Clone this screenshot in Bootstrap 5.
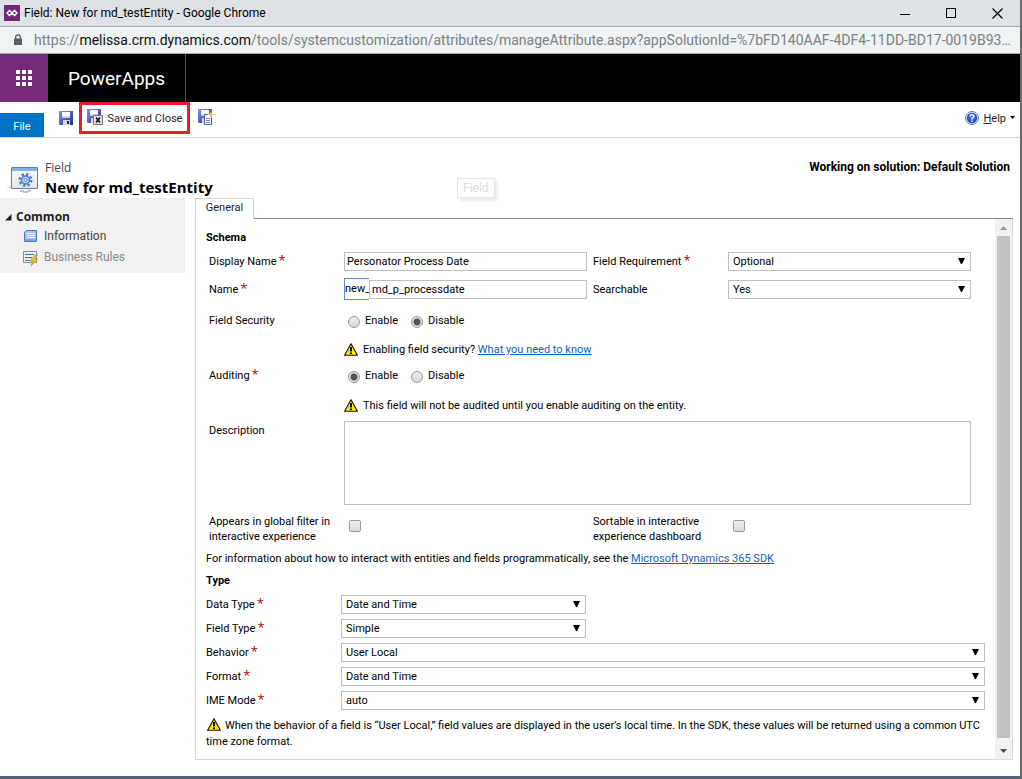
<!DOCTYPE html>
<html lang="en">
<head>
<meta charset="utf-8">
<meta name="viewport" content="width=device-width, initial-scale=1">
<title>Field: New for md_testEntity</title>
<link href="https://cdn.jsdelivr.net/npm/bootstrap@5.3.0/dist/css/bootstrap.min.css" rel="stylesheet">
<style>
  body { font-family: Roboto, "Open Sans", sans-serif; font-size: 11px; line-height: 16px; color: #000; background: #fff; }
  svg { display: block; flex: none; }
  a { color: #1160b7; }
  .app-window { min-height: 100vh; border-right: 2px solid #6a6a6a; border-bottom: 3px solid #56607a; }
  .title-bar { height: 27px; background: #dee1e6; border-bottom: 1px solid #a9abaf; font-size: 12px; }
  .app-mark { width: 16px; height: 16px; background: #742774; }
  .win-btn { width: 46px; height: 26px; }
  .url-bar { height: 27px; background: #eff3f4; border-bottom: 1px solid #a9abaf; font-size: 14px; line-height: 22px; color: #7d8184; padding: 0 8px 0 13px; gap: 11px; }
  .url-bar b { font-weight: 400; color: #111; }
  .product-bar { height: 48px; background: #000; color: #fff; font-size: 19px; }
  .waffle { width: 48px; background: #742a76; }
  .product-name { border-right: 1px solid #555; padding: 2px 20px 0; }
  .ribbon { height: 36px; border-bottom: 1px solid #d6d6d6; }
  .btn.file-tab { width: 44px; height: 24px; background: #0072c6; color: #fff; font-size: 11px; padding: 4px 0 0; }
  .tool-row { padding: 0 5px 4px 15px; }
  .tool-row .btn { font-size: 11px; line-height: 16px; }
  .save-close { border: 3px solid #ed1c24; height: 32px; width: 111px; margin: 0 8px 0 6px; }
  .save-close span, .help-word { padding-top: 2px; }
  .record-head { height: 60px; }
  .record-icon { margin: 27px 0 0 6px; }
  .record-text { margin: 20px 0 0 5px; font-family: "Open Sans", sans-serif; }
  .record-title { font-size: 15px; line-height: 18px; }
  .record-kind { font-size: 12px; line-height: 20px; color: #444; }
  .solution-note { margin: 21px 10px 0 0; font-size: 12px; }
  .ghost-tip { left: 457px; bottom: 0; height: 20px; font-size: 12px; border: 1px solid #e6e6e6; color: #dcdcdc; background: #fff; box-shadow: 3px 3px 2px #eee; padding: 1px 5px; }
  .work-area { padding: 0 7px 16px 0; gap: 10px; }
  .work-area main { min-width: 0; }
  .side-nav { width: 185px; background: #f1f1f1; height: 75px; font-size: 12px; padding: 10px 0 0 5px; }
  .side-nav nav { padding-left: 18px; }
  .side-nav a { color: #444; line-height: 21px; }
  .side-nav a.muted-link { color: #8a8a8a; }
  .side-nav h2 { font-family: "Open Sans", sans-serif; font-size: 12px; line-height: 18px; color: #222; }
  .side-icon { margin-right: 5px; }
  .tab-strip { height: 21px; border-bottom: 1px solid #8b8b98; }
  .tab-item { width: 59px; height: 21px; border: 1px solid #d6d6d6; border-bottom: 0; background: #fff; font-size: 11px; line-height: 16px; }
  .btn.tab-item { padding: 0 0 2px; }
  .panel-box { border: 1px solid #d9d9d9; border-top: 0; }
  .panel-body { padding: 11px 10px 8px; }
  .panel-body h3 { font-size: 11px; line-height: 16px; }
  .schema-grid { display: grid; grid-template-columns: 135px 1fr 141px 1fr; grid-template-rows: 28px 28px 34px 24px 28px 32px 84px 46px; align-items: center; padding: 0 14px 0 3px; margin-top: 1px; }
  .schema-grid .second { padding-left: 6px; }
  .schema-grid > label, .schema-grid > span, .type-grid > label, .warn-gap span { padding-top: 2px; }
  .type-head { margin-top: 6px; }
  .type-grid { display: grid; grid-template-columns: 135px 245px 1fr; grid-auto-rows: 24px; align-items: center; margin-top: 3px; }
  .type-note { margin-top: 6px; }
  .full-row { grid-column: 2 / -1; }
  .row-start { grid-column: 1; }
  .req::after { content: "*"; color: #b00; font-family: "Open Sans", sans-serif; font-size: 13px; line-height: 12px; margin-left: 2px; }
  .entry, .pick { width: 100%; height: 19px; border: 1px solid #bfbfbf; border-radius: 0; padding: 1px 2px 0; color: #000; background: #fff; display: block; }
  .pick { appearance: none; padding: 1px 4px 0; background: #fff url("data:image/svg+xml,%3Csvg xmlns='http://www.w3.org/2000/svg' width='7' height='6'%3E%3Cpath d='M0 0H7L4 6H3Z'/%3E%3C/svg%3E") no-repeat right 5px top 5px; }
  .prefix { width: 25px; height: 22px; flex: none; border: 1px solid #5b8fd0; border-right: 0; line-height: 20px; }
  .memo { height: 84px; resize: none; }
  .pip { appearance: none; width: 12px; height: 12px; margin: 0; border: 1px solid #999; background: linear-gradient(#efefef, #d9d9d9); flex: none; }
  .pip[type=radio] { border-radius: 50%; margin-top: 2px; }
  .pip[type=checkbox] { border-radius: 2px; margin: 0 0 4px 5px; }
  .pip[type=radio]:checked { background: radial-gradient(circle, #555 0 3px, #e4e4e4 4px); }
  .choices { padding: 2px 0 0 4px; }
  .choices label { gap: 5px; }
  .choices label + label { margin-left: 13px; }
  .warn-gap { gap: 5px; }
  .note-icon { vertical-align: -2px; margin: 0 4px 0 1px; }
  .tall { line-height: 15px; }
  .scroll-track { width: 17px; background: #f1f1f1; }
  .scroll-thumb { width: 13px; background: #c1c1c1; }
  .scroll-btn { height: 17px; width: 17px; }
</style>
</head>
<body>
<svg width="0" height="0" class="position-absolute" aria-hidden="true">
  <defs>
    <linearGradient id="disk" x1="0" y1="0" x2="1" y2="1"><stop offset="0" stop-color="#7f93ee"/><stop offset="1" stop-color="#252c86"/></linearGradient>
    <radialGradient id="orb"><stop offset="0" stop-color="#4a86f0"/><stop offset="1" stop-color="#1c45b8"/></radialGradient>
    <symbol id="floppy" viewBox="0 0 14 14"><path fill="url(#disk)" d="M0 0H14V14H1L0 13Z"/><path fill="#f4f7ff" d="M3 1H11V7H3Z"/><path fill="#c4d0f2" d="M3 5H11V7H3Z"/><path fill="#d8d8dc" d="M4 9H11V14H4Z"/><path fill="#222a66" d="M8 10H10V13H8Z"/></symbol>
    <symbol id="warn" viewBox="0 0 14 13"><path d="M7 .7L13.4 12.3H.6Z" fill="#ffea00" stroke="#111" stroke-width="1.1" stroke-linejoin="round"/><path d="M6 4H8V8.500H6ZM6 9.500H8V11H6Z"/></symbol>
  </defs>
</svg>

<div class="app-window d-flex flex-column">
  <header>
    <div class="title-bar d-flex align-items-center">
      <span class="app-mark ms-1 me-1"><svg width="16" height="16" fill="none" stroke="#fff" stroke-width="1.500"><path d="M5.500 5.500L8 8L10.500 5.500L13 8L10.500 10.500L8 8L5.500 10.500L3 8Z"/></svg></span>
      <span>Field: New for md_testEntity - Google Chrome</span>
      <div class="ms-auto d-flex">
        <button class="btn p-0 border-0 win-btn" aria-label="Minimize"><svg class="mx-auto" width="11" height="11" stroke="#000"><path d="M0 6.500H10"/></svg></button>
        <button class="btn p-0 border-0 win-btn" aria-label="Maximize"><svg class="mx-auto" width="11" height="11" stroke="#000" fill="none"><path d="M.5.5H9.500V9.500H.5Z"/></svg></button>
        <button class="btn p-0 border-0 win-btn" aria-label="Close"><svg class="mx-auto" width="11" height="11" stroke="#000" stroke-width="1.200"><path d="M.5.5L10.500 10.500M10.500.5L.5 10.500"/></svg></button>
      </div>
    </div>
    <div class="url-bar d-flex align-items-center">
      <svg width="10" height="12"><path fill="#5a5e62" d="M1 4.500H9V11H1Z"/><path fill="none" stroke="#5a5e62" stroke-width="1.300" d="M2.700 5V3Q2.700 1 5 1T7.300 3V5"/></svg>
      <span class="text-truncate">https://<b>melissa.crm.dynamics.com</b>/tools/systemcustomization/attributes/manageAttribute.aspx?appSolutionId=%7bFD140AAF-4DF4-11DD-BD17-0019B93...</span>
    </div>
    <div class="product-bar d-flex align-items-stretch">
      <button class="btn p-0 border-0 rounded-0 waffle" aria-label="Apps"><svg class="mx-auto" width="16" height="16" fill="#fff"><path d="M0 0h4v4H0zM6 0h4v4H6zM12 0h4v4h-4zM0 6h4v4H0zM6 6h4v4H6zM12 6h4v4h-4zM0 12h4v4H0zM6 12h4v4H6zM12 12h4v4h-4z"/></svg></button>
      <span class="product-name d-flex align-items-center">PowerApps</span>
    </div>
    <nav class="ribbon d-flex" aria-label="Ribbon">
      <button class="btn border-0 rounded-0 file-tab align-self-end">File</button>
      <div class="d-flex align-items-center flex-fill tool-row">
        <button class="btn p-0 border-0" aria-label="Save"><svg width="14" height="14"><use href="#floppy"/></svg></button>
        <button class="btn rounded-0 p-0 save-close d-flex align-items-center justify-content-center"><svg width="17" height="17" class="me-1"><use href="#floppy" width="14" height="14"/><path d="M6.500 6.500H15.500V15.500H6.500Z" fill="#e4e4e4" stroke="#777"/><path d="M9 8.500L13 13.500M13 8.500L9 13.500" stroke="#111" stroke-width="1.600"/></svg><span>Save and Close</span></button>
        <button class="btn p-0 border-0" aria-label="Save and New"><svg width="17" height="17"><use href="#floppy" width="14" height="14"/><path d="M6.500 5.500H13.500V15.500H6.500Z" fill="#f2f6ff" stroke="#4c5f8a"/><path d="M8 9.500H12M8 11.500H12M8 13.500H12" stroke="#7488b8"/><path d="M13 2L14 4.500L16.500 5.500L14 6.500L13 9L12 6.500L9.500 5.500L12 4.500Z" fill="#f7c64a"/></svg></button>
        <button class="btn p-0 border-0 ms-auto d-flex align-items-center"><svg width="14" height="14"><circle cx="7" cy="7" r="6.500" fill="#e9f1ff" stroke="#5b7dc8"/><circle cx="7" cy="7" r="5.200" fill="url(#orb)"/><path d="M5 5.500Q5 3.700 7 3.700T9 5.500Q9 6.500 7 7.300V8.500M7 9.500V11" fill="none" stroke="#fff" stroke-width="1.400"/></svg><span class="mx-1 help-word"><u>H</u>elp</span><svg width="5" height="3"><path d="M0 0H5L2.500 3Z"/></svg></button>
      </div>
    </nav>
  </header>

  <div class="record-head d-flex position-relative">
    <svg class="record-icon" width="34" height="30"><defs><linearGradient id="pane" x1="0" y1="0" x2="0" y2="1"><stop offset="0" stop-color="#fff"/><stop offset="1" stop-color="#dde5ec"/></linearGradient></defs><path d="M0 22L6 19V24Z" fill="#e3e3e3"/><path d="M5.500 2.500H31.500V23.500H5.500Z" fill="url(#pane)" stroke="#6d7f8e"/><path d="M6 3H31V6H6Z" fill="#7fb6e6"/><circle cx="19.500" cy="15" r="5.500" fill="none" stroke="#4f79c4" stroke-width="3" stroke-dasharray="2.200 2.100"/><circle cx="19.500" cy="15" r="4" fill="#bcd2f5" stroke="#4f79c4" stroke-width="1.500"/><circle cx="19.500" cy="15" r="1.500" fill="#fff" stroke="#4f79c4"/><path d="M14 25H18V27H14ZM21 25H25V27H21ZM17 26H22V28H17Z" fill="#9db6de" opacity=".8"/></svg>
    <div class="record-text">
      <div class="record-kind">Field</div>
      <h1 class="record-title fw-bold m-0">New for md_testEntity</h1>
    </div>
    <strong class="ms-auto solution-note">Working on solution: Default Solution</strong>
    <div class="ghost-tip position-absolute">Field</div>
  </div>

  <div class="d-flex flex-fill work-area">
    <aside class="side-nav flex-shrink-0">
      <h2 class="d-flex align-items-center m-0 fw-bold"><svg width="7" height="7" class="me-1"><path d="M6.500 0V6.500H0Z" fill="#222"/></svg>Common</h2>
      <nav aria-label="Common">
        <a href="#" class="d-flex align-items-center text-decoration-none"><svg width="16" height="16" class="side-icon"><path d="M3.500 1.500H13.500V12.500H1.500V3.500Z" fill="#a9c1ee" stroke="#5070b4"/><path d="M4 4.500H12M4 6.500H12M4 8.500H12" stroke="#eaf1ff"/><path d="M1 11H13" stroke="#6784c4"/></svg>Information</a>
        <a href="#" class="d-flex align-items-center text-decoration-none muted-link"><svg width="16" height="16" class="side-icon"><path d="M.5 1.500H13.500V12.500H.5Z" fill="#eef3fb" stroke="#7790b0"/><path d="M2 4.500H11M2 7.500H9M2 10.500H7" stroke="#5a6f92"/><path d="M12 5L7 11H10L8 16L14.500 9H11.500L14.500 5Z" fill="#f7c52d" stroke="#a87a12" stroke-width=".6"/></svg>Business Rules</a>
      </nav>
    </aside>

    <main class="flex-fill d-flex flex-column">
      <div class="tab-strip"><button class="btn rounded-0 tab-item">General</button></div>
      <div class="panel-box d-flex flex-fill">
        <form class="panel-body flex-fill">
          <h3 class="fw-bold m-0">Schema</h3>
          <div class="schema-grid">
            <label for="dname" class="req">Display Name</label>
            <input id="dname" class="entry" value="Personator Process Date">
            <label for="freq" class="req second">Field Requirement</label>
            <select id="freq" class="pick"><option>Optional</option></select>

            <label for="sname" class="req">Name</label>
            <div class="d-flex align-items-center"><span class="prefix">new_</span><input id="sname" class="entry flex-fill" value="md_p_processdate"></div>
            <label for="srch" class="second">Searchable</label>
            <select id="srch" class="pick"><option>Yes</option></select>

            <span class="row-start">Field Security</span>
            <div class="full-row d-flex choices">
              <label class="d-flex align-items-center"><input type="radio" name="sec" class="pip">Enable</label>
              <label class="d-flex align-items-center"><input type="radio" name="sec" class="pip" checked>Disable</label>
            </div>
            <div class="full-row d-flex align-items-center warn-gap"><svg width="14" height="13"><use href="#warn"/></svg><span>Enabling field security? <a href="#">What you need to know</a></span></div>

            <span class="row-start req">Auditing</span>
            <div class="full-row d-flex choices">
              <label class="d-flex align-items-center"><input type="radio" name="aud" class="pip" checked>Enable</label>
              <label class="d-flex align-items-center"><input type="radio" name="aud" class="pip">Disable</label>
            </div>
            <div class="full-row d-flex align-items-center warn-gap"><svg width="14" height="13"><use href="#warn"/></svg><span>This field will not be audited until you enable auditing on the entity.</span></div>

            <label for="desc" class="row-start align-self-start">Description</label>
            <textarea id="desc" class="entry memo full-row"></textarea>

            <label for="glob" class="row-start tall">Appears in global filter in<br>interactive experience</label>
            <input id="glob" type="checkbox" class="pip">
            <label for="sort" class="second tall">Sortable in interactive<br>experience dashboard</label>
            <input id="sort" type="checkbox" class="pip">
          </div>
          <p class="m-0">For information about how to interact with entities and fields programmatically, see the <a href="#">Microsoft Dynamics 365 SDK</a></p>
          <h3 class="fw-bold mb-0 type-head">Type</h3>
          <div class="type-grid">
            <label for="dt" class="req">Data Type</label>
            <select id="dt" class="pick"><option>Date and Time</option></select>
            <label for="ft" class="req row-start">Field Type</label>
            <select id="ft" class="pick"><option>Simple</option></select>
            <label for="bh" class="req row-start">Behavior</label>
            <select id="bh" class="pick full-row"><option>User Local</option></select>
            <label for="fm" class="req">Format</label>
            <select id="fm" class="pick full-row"><option>Date and Time</option></select>
            <label for="im" class="req">IME Mode</label>
            <select id="im" class="pick full-row"><option>auto</option></select>
          </div>
          <p class="mb-0 type-note"><svg width="14" height="13" class="d-inline-block note-icon"><use href="#warn"/></svg>When the behavior of a field is “User Local,” field values are displayed in the user’s local time. In the SDK, these values will be returned using a common UTC time zone format.</p>
        </form>
        <div class="scroll-track d-flex flex-column align-items-center flex-shrink-0">
          <button class="btn p-0 border-0 scroll-btn" aria-label="Scroll up"><svg class="mx-auto" width="7" height="4"><path d="M0 4H7L3.500 0Z" fill="#9a9a9a"/></svg></button>
          <div class="scroll-thumb flex-fill"></div>
          <button class="btn p-0 border-0 scroll-btn mt-1" aria-label="Scroll down"><svg class="mx-auto" width="7" height="4"><path d="M0 0H7L3.500 4Z" fill="#4d4d4d"/></svg></button>
        </div>
      </div>
    </main>
  </div>
</div>
<script src="https://cdn.jsdelivr.net/npm/bootstrap@5.3.0/dist/js/bootstrap.bundle.min.js"></script>
</body>
</html>
